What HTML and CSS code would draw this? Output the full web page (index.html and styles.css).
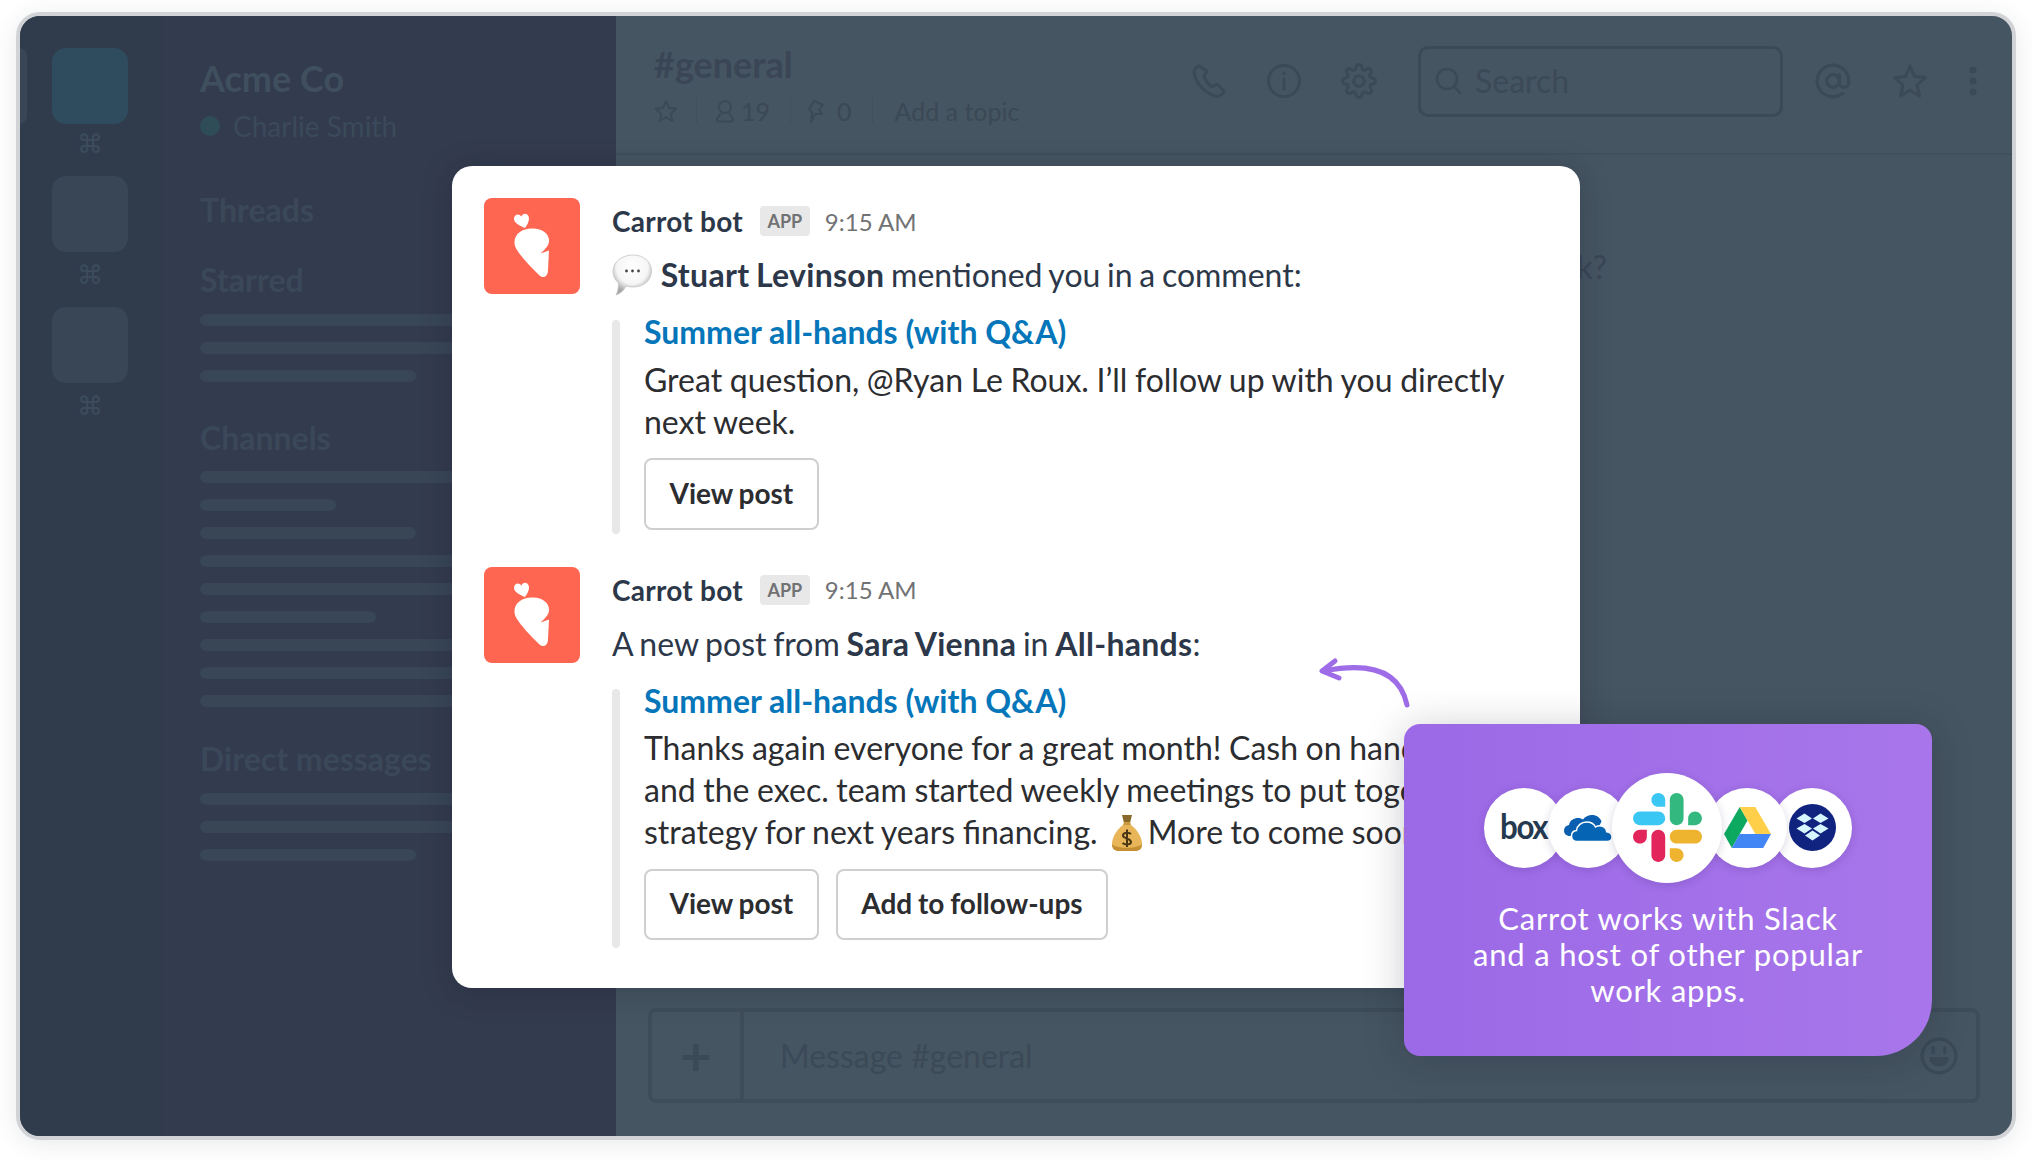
FILE: index.html
```html
<!DOCTYPE html>
<html lang="en">
<head>
<meta charset="utf-8">
<title>Carrot bot in Slack</title>
<link rel="stylesheet" href="styles.css">
</head>
<body>
<svg class="defs" width="0" height="0" aria-hidden="true">
  <symbol id="carrot" viewBox="0 0 96 96">
    <path fill="#fff" d="M41 30C36 28 30 25 30 21C30 16 35 15 37.5 18.500C39 14 45 15 45 20.500C45 24 43 27 41 30Z"/>
    <path fill="#fff" d="M30.500 45C30 36 38 30.500 48 30.500C58 30 66 36 65 44C64 49 60 52 56.500 55.500L65 52.500L64 72C64 79 59 81 55 77C46 68 38 60 33 52C31.500 50 30.500 47 30.500 45Z"/>
  </symbol>
  <symbol id="star" viewBox="0 0 36 36">
    <path fill="none" stroke="currentColor" stroke-width="3" stroke-linejoin="round" d="M18 3L22.500 13.500L33.500 14.500L25 22L27.500 33L18 27.200L8.500 33L11 22L2.500 14.500L13.500 13.500Z"/>
  </symbol>
</svg>
<main class="window">
  <nav class="rail">
    <div class="rail-item"><div class="tile tile-active"></div><span class="cmd">⌘</span></div>
    <div class="rail-item"><div class="tile"></div><span class="cmd">⌘</span></div>
    <div class="rail-item"><div class="tile"></div><span class="cmd">⌘</span></div>
  </nav>
  <aside class="sidebar">
    <h1 class="team">Acme Co</h1>
    <div class="user"><span class="dot"></span>Charlie Smith</div>
    <h2 class="nav-head threads">Threads</h2>
    <h2 class="nav-head starred">Starred</h2>
    <div class="bars">
      <i class="bar"></i><i class="bar"></i><i class="bar bar-m"></i>
    </div>
    <h2 class="nav-head channels">Channels</h2>
    <div class="bars">
      <i class="bar"></i><i class="bar bar-s"></i><i class="bar bar-m"></i><i class="bar"></i><i class="bar"></i><i class="bar bar-l"></i><i class="bar"></i><i class="bar"></i><i class="bar"></i>
    </div>
    <h2 class="nav-head dms">Direct messages</h2>
    <div class="bars">
      <i class="bar"></i><i class="bar"></i><i class="bar bar-m"></i>
    </div>
  </aside>
  <section class="channel">
    <header class="chan-head">
      <div class="chan-info">
        <div class="chan-name">#general</div>
        <div class="chan-meta">
          <svg class="meta-icon"><use href="#star"/></svg>
          <span class="sep sep-a"></span>
          <svg class="meta-icon meta-person" viewBox="0 0 24 24" fill="none" stroke="currentColor" stroke-width="2"><circle cx="12" cy="8" r="6"/><path d="M8 14L4 20C3.500 22 5 22.500 6 22.500H18C19 22.500 20.500 22 20 20L16 14"/></svg>
          <span class="count">19</span>
          <span class="sep sep-b"></span>
          <svg class="meta-icon meta-pin" viewBox="0 0 24 24" fill="none" stroke="currentColor" stroke-width="2" stroke-linejoin="round"><path d="M9 2L18 6L14 11L17 15L10 15L6 23L7 13L4 10Z"/></svg>
          <span class="count count-pin">0</span>
          <span class="sep sep-b"></span>
          <span class="topic">Add a topic</span>
        </div>
      </div>
      <div class="tools">
        <svg class="tool" viewBox="0 0 36 36" fill="none" stroke="currentColor" stroke-width="3" stroke-linejoin="round"><path d="M8 3C4 4 2 8 3.500 12C6 21 14 30 24 33C28 34 32 32 33 28L26.500 21.500C24.500 20.500 22.500 24 20.500 23.500C17 21.500 13.500 16 13 13C14 11.500 16.500 10 15 7.500Z"/></svg>
        <svg class="tool" viewBox="0 0 36 36" fill="none" stroke="currentColor" stroke-width="3"><circle cx="18" cy="18" r="15.500"/><path d="M18 16V26" stroke-linecap="round"/><circle cx="18" cy="10.500" r="1" fill="currentColor" stroke-width="1.500"/></svg>
        <svg class="tool" viewBox="0 0 24 24" fill="none" stroke="currentColor" stroke-width="2"><circle cx="12" cy="12" r="3.500"/><path d="M19.400 15a1.650 1.650 0 0 0 .33 1.820l.06.06a2 2 0 0 1 0 2.830 2 2 0 0 1-2.830 0l-.06-.06a1.650 1.650 0 0 0-1.820-.33 1.650 1.650 0 0 0-1 1.510V21a2 2 0 0 1-2 2 2 2 0 0 1-2-2v-.09A1.650 1.650 0 0 0 9 19.400a1.650 1.650 0 0 0-1.820.33l-.06.06a2 2 0 0 1-2.830 0 2 2 0 0 1 0-2.830l.06-.06a1.650 1.650 0 0 0 .33-1.820 1.650 1.650 0 0 0-1.510-1H3a2 2 0 0 1-2-2 2 2 0 0 1 2-2h.09A1.650 1.650 0 0 0 4.600 9a1.650 1.650 0 0 0-.33-1.820l-.06-.06a2 2 0 0 1 0-2.830 2 2 0 0 1 2.830 0l.06.06a1.650 1.650 0 0 0 1.820.33H9a1.650 1.650 0 0 0 1-1.510V3a2 2 0 0 1 2-2 2 2 0 0 1 2 2v.09a1.650 1.650 0 0 0 1 1.510 1.650 1.650 0 0 0 1.820-.33l.06-.06a2 2 0 0 1 2.830 0 2 2 0 0 1 0 2.830l-.06.06a1.650 1.650 0 0 0-.33 1.820V9a1.650 1.650 0 0 0 1.510 1H21a2 2 0 0 1 2 2 2 2 0 0 1-2 2h-.09a1.650 1.650 0 0 0-1.510 1z"/></svg>
        <div class="search">
          <svg class="search-icon" viewBox="0 0 28 28" fill="none" stroke="currentColor" stroke-width="2.600" stroke-linecap="round"><circle cx="12" cy="12" r="10"/><path d="M19 19L25 26"/></svg>
          <span>Search</span>
        </div>
        <svg class="tool tool-at" viewBox="0 0 24 24" fill="none" stroke="currentColor" stroke-width="2" stroke-linecap="round"><circle cx="12" cy="12" r="4"/><path d="M16 8v5a3 3 0 0 0 6 0v-1a10 10 0 1 0-3.920 7.940"/></svg>
        <svg class="tool tool-star"><use href="#star"/></svg>
        <svg class="tool-dots" viewBox="0 0 8 32" fill="currentColor"><circle cx="4" cy="5" r="3.500"/><circle cx="4" cy="16" r="3.500"/><circle cx="4" cy="27" r="3.500"/></svg>
      </div>
    </header>
    <div class="history">
      <p class="ghost-line">this week?</p>
    </div>
    <div class="composer">
      <div class="plus">+</div>
      <div class="composer-text">Message #general</div>
      <svg class="smile" viewBox="0 0 36 36" fill="none" stroke="currentColor" stroke-width="3"><circle cx="18" cy="18" r="16"/><path d="M12.500 10V15M23.500 10V15" stroke-linecap="round"/><path fill="currentColor" stroke="none" d="M9 19H27C27 25 23 28 18 28C13 28 9 25 9 19Z"/></svg>
    </div>
  </section>

  <article class="modal">
    <div class="msg">
      <div class="avatar"><svg class="carrot"><use href="#carrot"/></svg></div>
      <div class="msg-body">
        <div class="msg-meta"><strong class="name">Carrot bot</strong><span class="badge">APP</span><span class="time">9:15 AM</span></div>
        <p class="lead">
          <svg class="emoji-speech" viewBox="0 0 40 42"><defs><radialGradient id="bub" cx="50%" cy="32%" r="62%"><stop offset="0" stop-color="#fff"/><stop offset=".65" stop-color="#f6f6f6"/><stop offset="1" stop-color="#a8a8a8"/></radialGradient></defs><path fill="url(#bub)" stroke="#c4c4c4" stroke-width=".8" d="M21 1C32 1 39.500 8 39.500 17C39.500 26 32 33 21 33C18.500 33 16 32.600 14 32C12 36 9 39.500 4 41C6 37.500 6.500 33 6.500 29C3 26 1 22 1 17C1 8 10 1 21 1Z"/><circle cx="14.500" cy="17" r="1.400" fill="#444"/><circle cx="20.500" cy="17" r="1.400" fill="#444"/><circle cx="26.500" cy="17" r="1.400" fill="#444"/></svg>
          <strong>Stuart Levinson</strong> mentioned you in a comment:
        </p>
        <div class="quote">
          <div class="quote-bar"></div>
          <div class="quote-main">
            <a class="title">Summer all-hands (with Q&amp;A)</a>
            <p class="text">Great question, @Ryan Le Roux. I’ll follow up with you directly<br>next week.</p>
            <div class="actions"><span class="btn">View post</span></div>
          </div>
        </div>
      </div>
    </div>
    <div class="msg">
      <div class="avatar"><svg class="carrot"><use href="#carrot"/></svg></div>
      <div class="msg-body">
        <div class="msg-meta"><strong class="name">Carrot bot</strong><span class="badge">APP</span><span class="time">9:15 AM</span></div>
        <p class="lead">A new post from <strong>Sara Vienna</strong> in <strong>All-hands</strong>:</p>
        <div class="quote">
          <div class="quote-bar"></div>
          <div class="quote-main quote-main-long">
            <a class="title">Summer all-hands (with Q&amp;A)</a>
            <p class="text">Thanks again everyone for a great month! Cash on hand<br>and the exec. team started weekly meetings to put together a<br>strategy for next years financing. <svg class="emoji-bag" viewBox="0 0 32 38"><path fill="#8a6a2a" d="M11 1L21 1L19 9H13Z"/><path fill="#c99a3c" d="M13 8H19L20 11H12Z"/><path fill="#e8b658" d="M12 11C5 16 1 24 1 30C1 35 4 37 8 37H24C28 37 31 35 31 30C31 24 27 16 20 11Z"/><path fill="#c48f34" d="M1 30C1 35 4 37 8 37H24C28 37 31 35 31 30C27 35 5 35 1 30Z"/><path fill="none" stroke="#4a3514" stroke-width="2" d="M20 20C18 18 12 18 12 21.500C12 25 20 24 20 28C20 31 14 31 11.500 29M16 15.500V33"/></svg> More to come soon!</p>
            <div class="actions"><span class="btn">View post</span><span class="btn">Add to follow-ups</span></div>
          </div>
        </div>
      </div>
    </div>
  </article>

  <svg class="arrow" viewBox="0 0 100 60" fill="none" stroke="#9f6ce8" stroke-width="5" stroke-linecap="round" stroke-linejoin="round"><path d="M91 49C86 25 68 3 8 15"/><path d="M19 5L6 15L23 22"/></svg>

  <aside class="promo">
    <div class="logos">
      <div class="logo logo-box"><span class="box-word">box</span></div>
      <div class="logo logo-one">
        <svg class="icon-one" viewBox="0 0 48 27"><path fill="#0a5fb0" d="M6 21C2 21 0 18.500 0 15.500C0 12.500 2 10.500 5 10C6 5 10 3 14 3C16 3 18 3.700 19 4.500C21 1.500 24.500 0 28 0C32.500 0 36 2.500 37.500 6.500L30 21Z"/><path fill="#0564b4" stroke="#fff" stroke-width="1.500" d="M13 26.500C9.500 26.500 7.500 24 7.500 21C7.500 18 9.500 15.800 12.500 15.500C13 10.500 17.500 7 22.500 7C26.500 7 30 9 31.500 12C33 11 34.500 10.700 36 10.700C39.500 10.700 42.500 13.500 42.700 16.800C45.700 17.300 48 19.300 48 22C48 25 45.500 26.500 43 26.500Z"/></svg>
      </div>
      <div class="logo logo-slack">
        <svg class="icon-slack" viewBox="0 0 2447.600 2452.500"><path d="m897.400 0c-135.300.1-244.800 109.900-244.700 245.200-.1 135.300 109.500 245.100 244.800 245.200h244.800v-245.100c.1-135.300-109.500-245.100-244.900-245.300.1 0 .1 0 0 0m0 654h-652.600c-135.300.1-244.900 109.900-244.800 245.200-.2 135.300 109.400 245.100 244.700 245.300h652.700c135.300-.1 244.900-109.900 244.800-245.200.1-135.400-109.500-245.200-244.800-245.300z" fill="#3bc7f3"/><path d="m2447.600 899.200c.1-135.300-109.500-245.100-244.800-245.200-135.300.1-244.900 109.900-244.800 245.200v245.300h244.800c135.300-.1 244.900-109.900 244.800-245.300zm-652.700 0v-654c.1-135.200-109.400-245-244.700-245.200-135.300.1-244.900 109.900-244.800 245.200v654c-.2 135.300 109.400 245.100 244.700 245.300 135.300-.1 244.900-109.900 244.800-245.300z" fill="#33b87f"/><path d="m1550.100 2452.500c135.300-.1 244.900-109.900 244.800-245.200.1-135.300-109.500-245.100-244.800-245.200h-244.800v245.200c-.1 135.200 109.500 245 244.800 245.200zm0-654.100h652.700c135.300-.1 244.900-109.900 244.800-245.200.2-135.300-109.400-245.100-244.700-245.300h-652.700c-135.300.1-244.900 109.900-244.800 245.200-.1 135.400 109.400 245.200 244.700 245.300z" fill="#eeb32f"/><path d="m0 1553.200c-.1 135.300 109.500 245.100 244.800 245.200 135.300-.1 244.900-109.900 244.800-245.200v-245.200h-244.800c-135.300.1-244.900 109.900-244.800 245.200zm652.700 0v654c-.2 135.300 109.400 245.100 244.700 245.300 135.300-.1 244.900-109.900 244.800-245.200v-653.900c.2-135.300-109.400-245.100-244.700-245.300-135.400 0-244.900 109.800-244.800 245.100 0 0 0 .1 0 0" fill="#e2265c"/></svg>
      </div>
      <div class="logo logo-drive">
        <svg class="icon-drive" viewBox="0 0 47 41"><path fill="#0da960" d="M15.700 0L0 27L7.800 41L23.500 13.500Z"/><path fill="#ffcf4a" d="M15.700 0H31.300L47 27H31.400Z"/><path fill="#4285f4" d="M7.800 41H39.200L47 27H15.700Z"/></svg>
      </div>
      <div class="logo logo-drop">
        <svg class="icon-drop" viewBox="0 0 47 47"><circle cx="23.500" cy="23.500" r="23.500" fill="#10247f"/><g fill="#d6f7ff"><path d="M15.500 9.500L23 14.500L15.500 19L7.500 14.500Z"/><path d="M31.500 9.500L39.500 14.500L31.500 19L24 14.500Z"/><path d="M15.500 20L23 24.500L15.500 29.500L7.500 24.500Z"/><path d="M31.500 20L39.500 24.500L31.500 29.500L24 24.500Z"/><path d="M23.500 26.500L31 31.500L23.500 36.500L16 31.500Z"/></g></svg>
      </div>
    </div>
    <p class="promo-text">Carrot works with Slack<br>and a host of other popular<br>work apps.</p>
  </aside>
</main>
</body>
</html>
```

FILE: styles.css
```css
* { box-sizing: border-box; }
html, body { margin: 0; padding: 0; background: #fff; }
body { width: 2032px; height: 1160px; padding: 12px 16px 20px; font-family: "Lato", sans-serif; overflow: hidden; }
.defs { display: block; position: absolute; }
p, h1, h2 { margin: 0; }

.window {
  position: relative;
  display: flex;
  width: 2000px;
  height: 1128px;
  border: 4px solid #d1d3d6;
  border-radius: 24px;
  background: #465562;
  box-shadow: 0 4px 24px rgba(40, 50, 70, .1);
  overflow: hidden;
}

.rail {
  position: relative;
  flex: none;
  width: 144px;
  padding: 32px 4px 0 0;
  display: flex;
  flex-direction: column;
  align-items: center;
  gap: 17px;
  background: #303c4c;
}
.rail::before {
  content: "";
  position: absolute;
  left: -2px;
  top: 32px;
  width: 9px;
  height: 76px;
  border-radius: 0 8px 8px 0;
  background: #384656;
}
.rail-item { display: flex; flex-direction: column; align-items: center; }
.tile { width: 76px; height: 76px; border-radius: 14px; background: #384656; }
.tile-active { background: #2f4c5e; }
.cmd { margin-top: 8px; height: 30px; line-height: 30px; font-family: "DejaVu Sans", sans-serif; font-size: 26px; color: #3d4c5c; }
.tile-active + .cmd { margin-top: 5px; }

.sidebar {
  flex: none;
  width: 452px;
  padding: 41px 0 0 36px;
  background: #333b4e;
  overflow: hidden;
}
.team { font-size: 36px; line-height: 42px; font-weight: 700; color: #3f4f5e; }
.user { display: flex; align-items: center; gap: 13px; margin-top: 11px; height: 32px; font-size: 28px; color: #3b4a5a; }
.dot { width: 20px; height: 20px; border-radius: 50%; background: #2f4d57; }
.nav-head { font-size: 32px; line-height: 36px; font-weight: 700; color: #3a4859; }
.threads { margin-top: 50px; }
.starred { margin-top: 34px; }
.channels { margin-top: 38px; }
.dms { margin-top: 34px; }
.bars { display: flex; flex-direction: column; gap: 16px; margin-top: 16px; }
.channels + .bars { margin-top: 15px; }
.bar { display: block; width: 340px; height: 12px; border-radius: 6px; background: #384656; }
.bar-s { width: 136px; }
.bar-m { width: 216px; }
.bar-l { width: 176px; }

.channel { flex: 1; min-width: 0; display: flex; flex-direction: column; }
.chan-head {
  flex: none;
  height: 139px;
  display: flex;
  align-items: center;
  justify-content: space-between;
  padding: 0 35px 7px 38px;
  border-bottom: 2px solid #42505d;
  color: #3d4a58;
}
.chan-info { align-self: flex-start; padding-top: 27px; }
.chan-name { font-size: 36px; line-height: 42px; font-weight: 700; color: #3a4655; }
.chan-meta { display: flex; align-items: center; margin-top: 11px; height: 30px; font-size: 25px; color: #3b4855; }
.meta-icon { flex: none; width: 24px; height: 26px; color: #3c4957; }
.sep { flex: none; width: 1px; height: 26px; background: #42505d; }
.sep-a { margin-left: 18px; }
.sep-b { margin-left: 20px; }
.meta-person { margin-left: 16px; }
.meta-pin { margin-left: 14px; }
.count { margin-left: 4px; }
.count-pin { margin-left: 8px; }
.topic { margin-left: 22px; }
.tools { display: flex; align-items: center; gap: 39px; color: #3c4957; }
.tool { width: 36px; height: 36px; }
.search {
  display: flex;
  align-items: center;
  gap: 12px;
  width: 365px;
  height: 71px;
  margin-left: 2px;
  padding-left: 14px;
  border: 3px solid #3c4957;
  border-radius: 10px;
  font-size: 32px;
  color: #3c4957;
}
.search-icon { width: 28px; height: 28px; }
.search span { margin-top: -2px; }
.tool-at { margin-left: -8px; width: 38px; height: 38px; }
.tool-star { margin-left: 1px; }
.tool-dots { width: 8px; height: 32px; margin-left: 2px; }

.history { flex: 1; display: flex; justify-content: flex-end; padding: 92px 405px 0 0; }
.ghost-line { font-size: 32px; line-height: 40px; color: #3a4655; white-space: nowrap; }
.composer {
  flex: none;
  display: flex;
  align-items: center;
  height: 95px;
  margin: 0 32px 33px;
  border: 4px solid #3f4d5a;
  border-radius: 8px;
  color: #3c4957;
}
.plus { width: 92px; height: 100%; display: flex; align-items: center; justify-content: center; border-right: 4px solid #3f4d5a; font-size: 54px; font-weight: 700; line-height: 1; }
.composer-text { flex: 1; padding-left: 36px; font-size: 32px; }
.smile { width: 38px; height: 38px; margin-right: 18px; }

.modal {
  position: absolute;
  left: 432px;
  top: 150px;
  width: 1128px;
  height: 822px;
  padding: 32px;
  display: flex;
  flex-direction: column;
  gap: 33px;
  border-radius: 20px;
  background: #fff;
  box-shadow: 0 4px 30px rgba(20, 25, 40, .25);
  color: #2c3849;
}
.msg { display: flex; gap: 32px; }
.avatar { flex: none; width: 96px; height: 96px; border-radius: 8px; background: #ff6652; }
.carrot { display: block; width: 96px; height: 96px; }
.msg-body { flex: 1; min-width: 0; }
.msg-meta { display: flex; align-items: center; height: 46px; }
.name { font-size: 28px; font-weight: 700; letter-spacing: .25px; color: #2c3849; }
.badge { margin-left: 17px; width: 50px; height: 30px; line-height: 30px; text-align: center; border-radius: 4px; background: #e8e8e8; font-size: 18px; font-weight: 700; color: #717274; }
.time { margin-left: 15px; font-size: 24px; color: #717274; }
.lead { margin-top: 10px; height: 42px; line-height: 42px; font-size: 32px; white-space: nowrap; word-spacing: -1.500px; color: #2c3849; }
.lead strong { font-weight: 700; letter-spacing: .3px; }
.emoji-speech { width: 40px; height: 42px; vertical-align: -9px; margin-right: 2px; }
.quote { display: flex; gap: 24px; margin-top: 24px; }
.quote-bar { flex: none; width: 8px; border-radius: 4px; background: #e8e8e8; }
.quote-main { flex: 1; min-width: 0; padding-bottom: 4px; }
.quote-main-long { padding-bottom: 8px; }
.title { display: block; margin-top: -2px; font-size: 32px; line-height: 28px; font-weight: 700; color: #0576b9; }
.text { margin-top: 13px; font-size: 32px; line-height: 42px; word-spacing: -.6px; color: #2c2d30; white-space: nowrap; }
.quote-main-long .text { margin-top: 12px; }
.quote-main-long .actions { margin-top: 16px; }
.emoji-bag { width: 32px; height: 38px; vertical-align: -8px; margin: 0 -3px 0 6px; }
.actions { display: flex; gap: 17px; margin-top: 15px; }
.btn { display: flex; align-items: center; height: 71.500px; padding: 0 23.500px 2px; border: 2px solid #cfcfcf; border-radius: 8px; background: #fff; font-size: 28px; font-weight: 700; word-spacing: -1px; color: #2c2d30; white-space: nowrap; }

.arrow { position: absolute; left: 1296px; top: 640px; width: 100px; height: 60px; }

.promo {
  position: absolute;
  left: 1384px;
  top: 708px;
  width: 528px;
  height: 332px;
  padding-top: 48px;
  border-radius: 16px 16px 56px 16px;
  background: linear-gradient(90deg, #9c69e7, #a876ea);
  box-shadow: 0 4px 40px rgba(20, 25, 40, .22);
  color: #fff;
}
.logos { display: flex; justify-content: center; align-items: center; height: 111px; }
.logo { position: relative; flex: none; display: flex; align-items: center; justify-content: center; width: 80px; height: 80px; border-radius: 50%; background: #fff; box-shadow: 0 2px 10px rgba(40, 20, 90, .18); }
.logo-box { z-index: 1; }
.logo-one { z-index: 2; margin-left: -16px; }
.logo-slack { z-index: 4; width: 110px; height: 110px; margin-left: -16px; }
.logo-drive { z-index: 3; margin-left: -15px; }
.logo-drop { z-index: 2; margin-left: -15px; }
.box-word { display: block; font-size: 34px; font-weight: 700; line-height: 1; letter-spacing: -1.500px; color: #25394f; transform: scaleX(.92); margin-top: -3px; }
.icon-one { width: 48px; height: 27px; margin-top: 2px; }
.icon-slack { width: 69px; height: 69px; }
.icon-drive { width: 47px; height: 41px; }
.icon-drop { width: 47px; height: 47px; }
.promo-text { margin-top: 17px; text-align: center; font-size: 31px; line-height: 36px; letter-spacing: .8px; color: #fff; }
```
